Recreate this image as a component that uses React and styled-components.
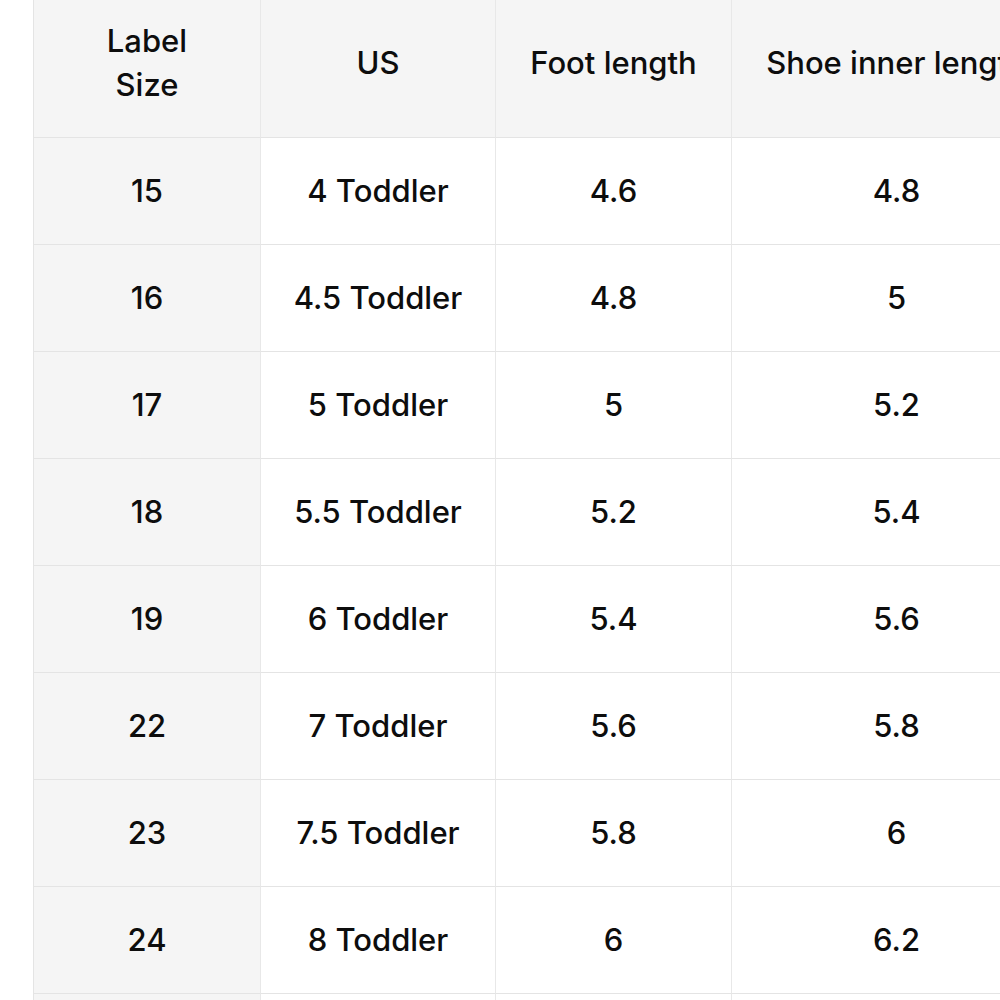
import React from "react";
import styled, { createGlobalStyle } from "styled-components";

const GlobalStyle = createGlobalStyle`
  html, body {
    margin: 0;
    padding: 0;
    background: #ffffff;
    overflow: hidden;
  }
  body {
    font-family: Inter, "Noto Sans", "Liberation Sans", sans-serif;
    color: #0d0d0d;
  }
`;

const Page = styled.div`
  width: 1000px;
  height: 1000px;
  overflow: hidden;
  padding-left: 33px;
  box-sizing: border-box;
`;

const Grid = styled.div`
  display: grid;
  grid-template-columns: 227px 235px 236px 330px;
  grid-auto-rows: 107px;
  grid-template-rows: 138px;
  border-left: 1px solid #e4e4e4;
  width: max-content;
`;

const Cell = styled.div`
  display: flex;
  align-items: center;
  justify-content: center;
  text-align: center;
  box-sizing: border-box;
  border-right: 1px solid #e8e8e8;
  border-bottom: 1px solid #e4e4e4;
  background: ${(p) => (p.$shaded ? "#f5f5f5" : "#ffffff")};
  font-size: 31px;
  font-weight: 500;
  line-height: 44px;
  white-space: ${(p) => (p.$head ? "normal" : "nowrap")};
  padding: ${(p) => (p.$head ? "0 40px 12px" : "0")};
`;

const HeadText = styled.span`
  white-space: ${(p) => (p.$wrap ? "normal" : "nowrap")};
`;

const headers = ["Label Size", "US", "Foot length", "Shoe inner length"];

const rows = [
  ["15", "4 Toddler", "4.6", "4.8"],
  ["16", "4.5 Toddler", "4.8", "5"],
  ["17", "5 Toddler", "5", "5.2"],
  ["18", "5.5 Toddler", "5.2", "5.4"],
  ["19", "6 Toddler", "5.4", "5.6"],
  ["22", "7 Toddler", "5.6", "5.8"],
  ["23", "7.5 Toddler", "5.8", "6"],
  ["24", "8 Toddler", "6", "6.2"],
  ["25", "8.5 Toddler", "6.2", "6.4"],
];

const App = () => {
  return (
    <>
      <GlobalStyle />
      <Page>
        <Grid>
          {headers.map((h, i) => (
            <Cell key={h} $shaded $head>
              <HeadText $wrap={i === 0}>{h}</HeadText>
            </Cell>
          ))}
          {rows.map((row) =>
            row.map((v, i) => (
              <Cell key={row[0] + "-" + i} $shaded={i === 0}>
                {v}
              </Cell>
            ))
          )}
        </Grid>
      </Page>
    </>
  );
};

export default App;
